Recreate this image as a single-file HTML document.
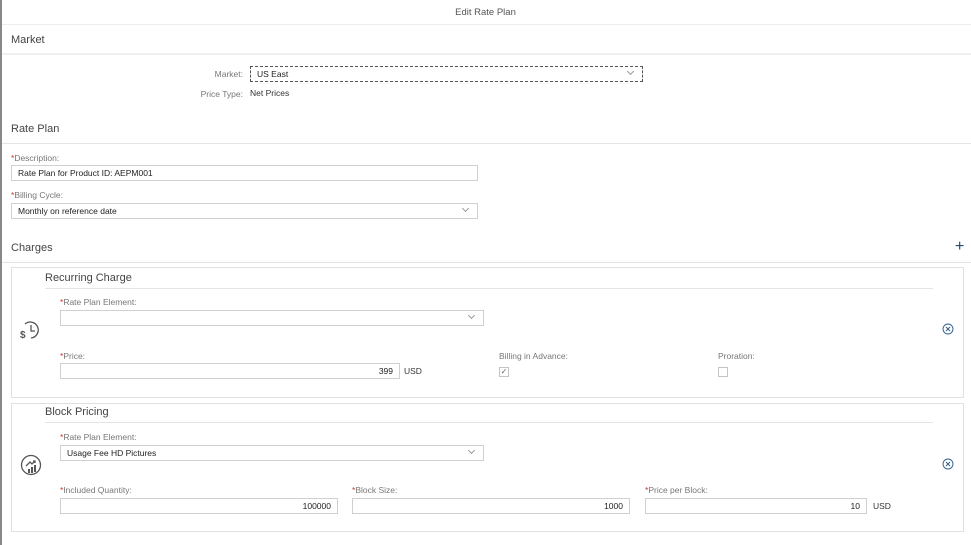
<!DOCTYPE html>
<html><head><meta charset="utf-8"><style>
*{margin:0;padding:0;box-sizing:border-box}
body{width:971px;height:545px;background:#fff;font-family:"Liberation Sans",sans-serif;color:#333;position:relative;overflow:hidden;font-size:9px}
.a{position:absolute;white-space:nowrap}
.lbl{color:#777;font-size:8.5px}
.req:before{content:"*";color:#c33}
.in{position:absolute;border:1px solid #d0d0d0;height:16px;background:#fff;font-size:8.5px;line-height:14px;padding:0 6px;color:#222}
.r{text-align:right}
.ln{position:absolute;height:1px;background:#e4e4e4}
.chev{position:absolute;right:9px;top:2px;width:5px;height:5px;border-right:1px solid #999;border-bottom:1px solid #999;transform:rotate(45deg)}
.card{position:absolute;border:1px solid #e0e0e0;left:11px;width:953px}
.h{font-size:11px;color:#444}
.cb{position:absolute;width:10px;height:10px;border:1px solid #c4c4c4}
</style></head><body>
<div style="position:absolute;left:0;top:0;width:2px;height:545px;background:#888"></div>
<div class="a" style="left:0;width:971px;text-align:center;top:7px;font-size:9.5px;color:#555">Edit Rate Plan</div>
<div class="ln" style="left:2px;right:0;top:24px;background:#ececec"></div>
<div class="a h" style="left:11px;top:34px">Market</div>
<div class="ln" style="left:2px;right:0;top:53px;height:2px;background:#f0f0f0"></div>
<div class="a lbl" style="left:150px;width:93px;text-align:right;top:69px">Market:</div>
<div class="in" style="left:250px;top:66px;width:393px;border:1px dashed #555">US East<span class="chev"></span></div>
<div class="a lbl" style="left:150px;width:93px;text-align:right;top:89px">Price Type:</div>
<div class="a" style="left:250px;top:88px;font-size:8.5px">Net Prices</div>
<div class="a h" style="left:11px;top:123px">Rate Plan</div>
<div class="ln" style="left:2px;right:0;top:143px"></div>
<div class="a lbl req" style="left:11px;top:153px">Description:</div>
<div class="in" style="left:11px;top:165px;width:467px">Rate Plan for Product ID: AEPM001</div>
<div class="a lbl req" style="left:11px;top:190px">Billing Cycle:</div>
<div class="in" style="left:11px;top:203px;width:467px">Monthly on reference date<span class="chev"></span></div>
<div class="a h" style="left:11px;top:242px">Charges</div>
<div class="a" style="left:955px;top:238px;font-size:16px;color:#1f4a75">+</div>
<div class="ln" style="left:2px;right:0;top:262px"></div>

<div class="card" style="top:267px;height:131px"></div>
<div class="a h" style="left:45px;top:272px">Recurring Charge</div>
<div class="ln" style="left:45px;width:888px;top:288px"></div>
<svg class="a" style="left:19px;top:318px" width="24" height="24" viewBox="0 0 24 24" fill="none" stroke="#555" stroke-width="1.3"><path d="M6 6A8 8 0 1 1 12 20"/><path d="M12 7v6h4"/><text x="1" y="20" font-size="10" fill="#555" stroke="none" font-family="Liberation Sans" font-weight="bold">$</text></svg>
<div class="a lbl req" style="left:60px;top:297px">Rate Plan Element:</div>
<div class="in" style="left:60px;top:310px;width:424px"><span class="chev"></span></div>
<svg class="a" style="left:942px;top:323px" width="12" height="12" viewBox="0 0 12 12" fill="none" stroke="#2b5a8a" stroke-width="0.9"><circle cx="6" cy="6" r="5"/><path d="M4 4l4 4M8 4l-4 4"/></svg>
<div class="a lbl req" style="left:60px;top:351px">Price:</div>
<div class="in r" style="left:60px;top:363px;width:340px">399</div>
<div class="a" style="left:404px;top:366px;font-size:8.5px">USD</div>
<div class="a lbl" style="left:499px;top:351px">Billing in Advance:</div>
<div class="cb" style="left:499px;top:367px;font-size:8px;line-height:8px;text-align:center;color:#666">✓</div>
<div class="a lbl" style="left:718px;top:351px">Proration:</div>
<div class="cb" style="left:718px;top:367px"></div>

<div class="card" style="top:403px;height:129px"></div>
<div class="a h" style="left:45px;top:406px">Block Pricing</div>
<div class="ln" style="left:45px;width:888px;top:422px"></div>
<svg class="a" style="left:19px;top:453px" width="24" height="24" viewBox="0 0 24 24" fill="none" stroke="#555" stroke-width="1.3"><circle cx="12" cy="12" r="9.5"/><path d="M7 13l4-4 2 2 3-3M14 8h2v2"/><path d="M10 20v-4M13 20v-6M16 19v-7" stroke-width="2"/></svg>
<div class="a lbl req" style="left:60px;top:432px">Rate Plan Element:</div>
<div class="in" style="left:60px;top:445px;width:424px">Usage Fee HD Pictures<span class="chev"></span></div>
<svg class="a" style="left:942px;top:458px" width="12" height="12" viewBox="0 0 12 12" fill="none" stroke="#2b5a8a" stroke-width="0.9"><circle cx="6" cy="6" r="5"/><path d="M4 4l4 4M8 4l-4 4"/></svg>
<div class="a lbl req" style="left:60px;top:485px">Included Quantity:</div>
<div class="in r" style="left:60px;top:498px;width:278px">100000</div>
<div class="a lbl req" style="left:352px;top:485px">Block Size:</div>
<div class="in r" style="left:352px;top:498px;width:278px">1000</div>
<div class="a lbl req" style="left:645px;top:485px">Price per Block:</div>
<div class="in r" style="left:645px;top:498px;width:222px">10</div>
<div class="a" style="left:873px;top:501px;font-size:8.5px">USD</div>
</body></html>
